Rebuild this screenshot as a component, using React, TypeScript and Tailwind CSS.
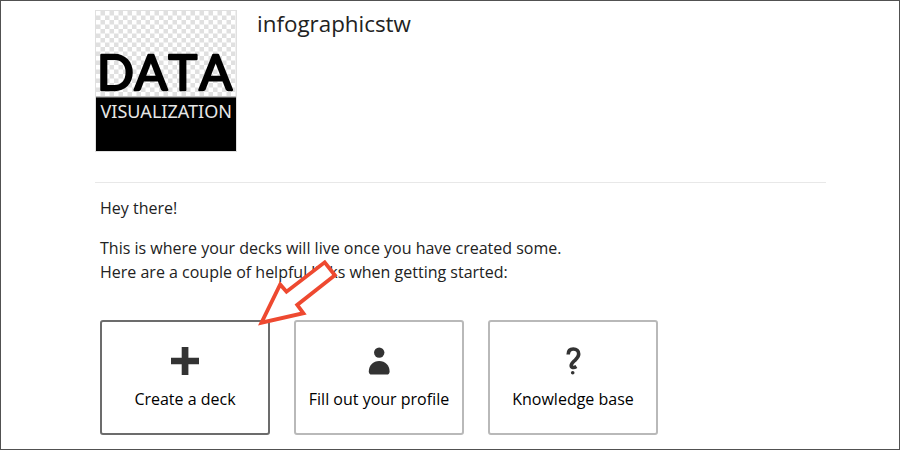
import type { ReactNode } from 'react';

function Logo() {
  return (
    <svg className="block h-[142px] w-[142px] shrink-0" viewBox="0 0 142 142">
      <defs>
        <pattern id="checker" x="1" y="1" width="9" height="9" patternUnits="userSpaceOnUse">
          <rect width="9" height="9" fill="#fff" />
          <rect x="4.5" width="4.5" height="4.5" fill="#e0e0e0" />
          <rect y="4.5" width="4.5" height="4.5" fill="#e0e0e0" />
        </pattern>
      </defs>
      <rect width="142" height="142" fill="#e0e0e0" />
      <rect x="1" y="1" width="140" height="86" fill="url(#checker)" />
      <rect x="1" y="86.5" width="140" height="1" fill="#888" />
      <rect x="1" y="87.5" width="140" height="53.5" fill="#000" />
      <g
        fontFamily="Lato, 'Open Sans', sans-serif"
        fontSize="48.5"
        fill="#000"
        stroke="#000"
        strokeWidth="2.4"
        strokeLinejoin="round"
      >
        <text y="79.5" x="1.9 39.6 73.6 104.3">DATA</text>
      </g>
      <text
        x="5.5"
        y="108"
        fontFamily="'Noto Sans', 'Open Sans', sans-serif"
        fontSize="17.5"
        fill="#e6e6e6"
        textLength="131.5"
        lengthAdjust="spacingAndGlyphs"
      >
        VISUALIZATION
      </text>
    </svg>
  );
}

function Plus() {
  return (
    <svg className="block h-7 w-7" viewBox="0 0 28 28" fill="#333">
      <path d="M10.7 0h6.7v10.7H28v6.6H17.4V28h-6.7V17.3H0v-6.6h10.7z" />
    </svg>
  );
}

function Person() {
  return (
    <svg className="block h-7 w-7" viewBox="0 0 28 28" fill="#333">
      <circle cx="14.2" cy="5.6" r="5.2" />
      <path d="M14.200 14c6 0 10.400 4.200 10.400 10.500 0 2-1 3.100-2.800 3.100H6.600c-1.800 0-2.800-1.100-2.800-3.100C3.800 18.200 8.200 14 14.200 14z" />
    </svg>
  );
}

function Question() {
  return (
    <svg className="block h-7 w-7" viewBox="0 0 28 28">
      <path
        d="M9.200 7.400C9.200 3.900 11.200 2 14.300 2C17.500 2 19.700 3.900 19.700 6.900C19.700 9.400 18.200 11 16.300 12.900C14.200 15 12.200 16.600 12.200 18.500C12.200 20.600 14.700 21.100 17.400 19.400"
        fill="none"
        stroke="#333"
        strokeWidth="3.600"
      />
      <circle cx="13.700" cy="25.700" r="1.800" fill="#333" />
    </svg>
  );
}

function Card({ label, active = false, children }: { label: string; active?: boolean; children: ReactNode }) {
  return (
    <a
      className={`flex h-[115px] w-[170px] flex-col items-center rounded-[3px] border-2 bg-white pt-[25px] text-black ${
        active ? 'border-[#6c6c6c]' : 'border-[#b9b9b9]'
      }`}
    >
      {children}
      <span className="mt-3 whitespace-nowrap leading-6">{label}</span>
    </a>
  );
}

export default function App() {
  return (
    <div className="relative h-[450px] w-[900px] overflow-hidden border border-[#515151] bg-white pl-[94px] pt-[9px] font-['Open_Sans',sans-serif] text-base text-[#222]">
      <header className="flex h-[173px] w-[731px] gap-5 border-b border-[#e8e8e8]">
        <Logo />
        <h1 className="text-[22.4px] leading-7">infographicstw</h1>
      </header>
      <main className="pl-[5px] pt-[13px]">
        <p className="mb-4 leading-6">Hey there!</p>
        <p className="leading-6">
          This is where your decks will live once you have created some.
          <br />
          Here are a couple of helpful links when getting started:
        </p>
        <div className="mt-9 flex gap-6">
          <Card label="Create a deck" active>
            <Plus />
          </Card>
          <Card label="Fill out your profile">
            <Person />
          </Card>
          <Card label="Knowledge base">
            <Question />
          </Card>
        </div>
      </main>
      <svg className="absolute left-[249px] top-[249px] h-20 w-[100px]" viewBox="250 250 100 80">
        <path
          d="M261.500 322.700L280.200 284.500L286.500 291.700L324.700 262.300L334.900 275.300L297.200 304.900L303.400 313.200Z"
          fill="#fff"
          stroke="#ee4930"
          strokeWidth="3.800"
        />
      </svg>
    </div>
  );
}
